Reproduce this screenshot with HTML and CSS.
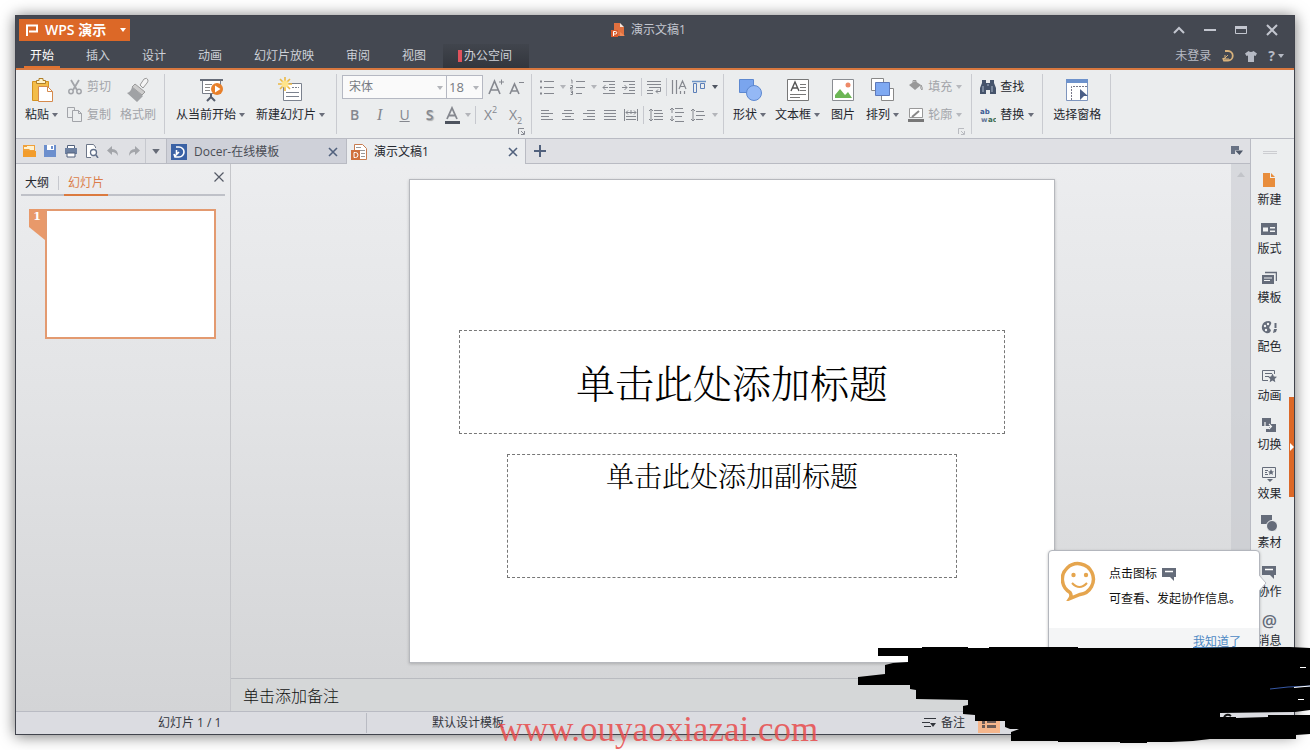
FILE: index.html
```html
<!DOCTYPE html>
<html lang="zh-CN">
<head>
<meta charset="utf-8">
<title>WPS 演示 - 演示文稿1</title>
<link rel="stylesheet" href="styles.css">
</head>
<body>
<svg class="defs" aria-hidden="true">
  <symbol id="caret" viewBox="0 0 6 4"><path d="M0 0h6L3 4z" fill="currentColor"/></symbol>
  <symbol id="close" viewBox="0 0 10 10"><path d="M1 1l8 8M9 1l-8 8" stroke="currentColor" stroke-width="1.6" fill="none"/></symbol>
  <symbol id="chat" viewBox="0 0 16 16"><path d="M1 2h14v9h-2v4l-4-4H1z" fill="currentColor"/><path d="M4 5.5h8" stroke="#fff" stroke-width="1.5"/></symbol>
  <symbol id="launcher" viewBox="0 0 7 7"><path d="M.5 6V.5H6M3 6.5h3.500V3M3 3l3 3" stroke="currentColor" fill="none"/></symbol>
</svg>

<div class="window">
  <header class="titlebar">
    <button class="app-button">
      <svg width="14" height="12" viewBox="0 0 14 12"><path d="M2 12V1.500H12v6H4" stroke="#fff" stroke-width="2" fill="none"/></svg>
      <b>WPS 演示</b>
      <svg class="app-caret" width="6" height="4"><use href="#caret"/></svg>
    </button>
    <div class="doc-title">
      <svg width="15" height="16" viewBox="0 0 15 16"><path d="M4 1h6v4h4v9H4z" fill="#e0703f"/><path d="M10 1l4 4h-4z" fill="#fbe3d6"/><path d="M1 8h7v7H1z" fill="#d95a2b"/><path d="M3.500 14V9.500h2a1 1 0 010 2.500h-2" stroke="#fff" fill="none"/><path d="M10 10l5 4h-5z" fill="#f08a58"/></svg>
      <span>演示文稿1</span>
    </div>
    <div class="window-controls">
      <button aria-label="折叠功能区"><svg width="14" height="12" viewBox="0 0 14 12"><path d="M2 9l5-5 5 5" stroke="currentColor" stroke-width="2" fill="none"/></svg></button>
      <button aria-label="最小化"><svg width="14" height="12" viewBox="0 0 14 12"><path d="M1 6h12" stroke="currentColor" stroke-width="2"/></svg></button>
      <button aria-label="最大化"><svg width="14" height="12" viewBox="0 0 14 12"><path d="M1.500 2.500h11v7h-11z" stroke="currentColor" fill="none"/><path d="M1 2h12v3H1z" fill="currentColor"/></svg></button>
      <button aria-label="关闭"><svg width="14" height="12" viewBox="0 0 14 12"><path d="M2 1l10 10M12 1L2 11" stroke="currentColor" stroke-width="2"/></svg></button>
    </div>
  </header>

  <nav class="menu">
    <div class="menu-tabs">
      <button class="menu-tab is-active">开始</button>
      <button class="menu-tab">插入</button>
      <button class="menu-tab">设计</button>
      <button class="menu-tab">动画</button>
      <button class="menu-tab">幻灯片放映</button>
      <button class="menu-tab">审阅</button>
      <button class="menu-tab">视图</button>
    </div>
    <button class="office-tab"><i></i>办公空间</button>
    <div class="account">
      <button>未登录</button>
      <button aria-label="Docer"><svg width="12" height="12" viewBox="0 0 12 12"><path d="M3 1h3a4.500 4.500 0 010 9.500H2L1 8" stroke="#d8b27c" stroke-width="1.800" fill="none"/><path d="M2 9l4-4M3 5v4h4" stroke="#d8b27c" fill="none"/></svg></button>
      <button aria-label="皮肤"><svg width="12" height="12" viewBox="0 0 12 12"><path d="M3.500 1Q6 3 8.500 1L12 3.500 10.500 6 9 5.500V12H3V5.500L1.500 6 0 3.500z" fill="currentColor"/></svg></button>
      <button aria-label="帮助" class="help"><b>?</b><svg width="6" height="4"><use href="#caret"/></svg></button>
    </div>
  </nav>

  <section class="ribbon">
    <div class="group g-clip">
      <button class="big"><svg width="28" height="28" viewBox="0 0 28 28"><path d="M4.500 5.500h16v19h-16z" fill="#f3bd49" stroke="#d39321"/><path d="M8.500 7.500v-3h2.500V2.500h4v2h2.500v3z" fill="#fff3c9" stroke="#ae7e28"/><path d="M10.500 10.500h9l5 5v10h-14z" fill="#fff" stroke="#d58a4d"/><path d="M19.500 10.500v5h5" fill="none" stroke="#d58a4d"/></svg><span>粘贴<svg class="caret" width="6" height="4"><use href="#caret"/></svg></span></button>
      <div class="stack">
        <button class="small is-off"><svg width="16" height="16" viewBox="0 0 16 16"><path d="M4 1l6 10M12 1L6 11" stroke="currentColor" stroke-width="1.800" fill="none"/><circle cx="4" cy="12.500" r="2.200" stroke="currentColor" fill="none" stroke-width="1.500"/><circle cx="12" cy="12.500" r="2.200" stroke="currentColor" fill="none" stroke-width="1.500"/></svg>剪切</button>
        <button class="small is-off"><svg width="16" height="16" viewBox="0 0 16 16"><path d="M5 10.500H.5V.5h7v3" stroke="currentColor" fill="none"/><path d="M5.500 3.500h6l3 3v8h-9zM11.500 3.500v3h3" stroke="currentColor" fill="none"/></svg>复制</button>
      </div>
      <button class="big is-off"><svg width="28" height="28" viewBox="0 0 28 28"><path d="M16 9l4-6q3-2 4 1 0 2-1 3l-4 5z" fill="#f4f4f4" stroke="#999"/><path d="M11 8l10 8-3 3-10-8z" fill="#ccc" stroke="#999"/><path d="M8 11l11 9-6 6-10-9q4-1 5-6z" fill="#a0a2a5"/></svg><span>格式刷</span></button>
    </div>
    <div class="group g-slides">
      <button class="big"><svg width="28" height="28" viewBox="0 0 28 28"><path d="M3 4h23" stroke="#666c78" stroke-width="2"/><path d="M5.500 5v12.500h18V5" fill="#fff" stroke="#777d88"/><path d="M8 8.500h7M8 11.500h5M8 14.500h5" stroke="#888"/><path d="M14 18v4M10 25l4-4 4 4" stroke="#555c6b" stroke-width="2" fill="none"/><circle cx="20" cy="13" r="6" fill="#e8802b"/><path d="M18 9.500l5.500 3.500-5.500 3.500z" fill="#fff"/></svg><span>从当前开始<svg class="caret" width="6" height="4"><use href="#caret"/></svg></span></button>
      <button class="big"><svg width="28" height="28" viewBox="0 0 28 28"><path d="M6.500 7.500h18v17h-18z" fill="#fff" stroke="#7b828e"/><path d="M15 11.500h7" stroke="#7b828e" stroke-dasharray="2 1"/><path d="M9 16.500h13M9 20.500h13" stroke="#7b828e"/><path d="M8 1v14M1 8h14M3 3l10 10M13 3L3 13" stroke="#ecb844" stroke-width="1.600"/><circle cx="8" cy="8" r="3.500" fill="#ffe48b"/></svg><span>新建幻灯片<svg class="caret" width="6" height="4"><use href="#caret"/></svg></span></button>
    </div>
    <div class="group g-font">
      <div class="stack">
        <div class="row">
          <label class="combo combo-font"><select aria-label="字体"><option>宋体</option></select><svg width="6" height="4"><use href="#caret"/></svg></label>
          <label class="combo combo-size"><select aria-label="字号"><option>18</option></select><svg width="6" height="4"><use href="#caret"/></svg></label>
          <button class="tool grow" aria-label="增大字号"><svg width="18" height="18" viewBox="0 0 18 18"><path d="M2 16L7.500 3 13 16M4 12h7" stroke="currentColor" stroke-width="1.600" fill="none"/><path d="M12 4h5M14.500 1.500v5" stroke="currentColor"/></svg></button>
          <button class="tool" aria-label="减小字号"><svg width="18" height="18" viewBox="0 0 18 18"><path d="M3 16L7.500 6 12 16M5 13h5" stroke="currentColor" stroke-width="1.600" fill="none"/><path d="M12 4.500h5" stroke="currentColor"/></svg></button>
        </div>
        <div class="row row-style">
          <button class="glyph"><b>B</b></button>
          <button class="glyph"><em>I</em></button>
          <button class="glyph"><u>U</u></button>
          <button class="glyph shadow">S</button>
          <button class="tool color" aria-label="字体颜色"><svg width="18" height="18" viewBox="0 0 18 18"><path d="M4 13L9 2l5 11M6 9.500h6" stroke="currentColor" stroke-width="1.800" fill="none"/><path d="M2 15h15v3H2z" fill="#4d535e"/></svg></button>
          <span class="drop is-off"><svg width="6" height="4"><use href="#caret"/></svg></span>
          <i class="sep"></i>
          <button class="glyph">X<sup>2</sup></button>
          <button class="glyph">X<sub>2</sub></button>
        </div>
      </div>
      <button class="launcher" aria-label="字体设置"><svg width="7" height="7"><use href="#launcher"/></svg></button>
    </div>
    <div class="group g-para">
      <div class="stack">
        <div class="row">
          <button class="tool" aria-label="项目符号"><svg width="16" height="16" viewBox="0 0 16 16"><path d="M5 2.500h10M5 8.500h10M5 14.500h10" stroke="currentColor"/><path d="M1 1.500h2v2H1zM1 7.500h2v2H1zM1 13.500h2v2H1z" fill="currentColor"/></svg></button>
          <span class="drop is-off"><svg width="6" height="4"><use href="#caret"/></svg></span>
          <button class="tool" aria-label="编号"><svg width="16" height="16" viewBox="0 0 16 16"><path d="M6 2.500h9M6 8.500h9M6 14.500h6" stroke="currentColor"/><path d="M1 1h1v3.500M.5 6.500h2v2h-2v1.500h2.500M.5 12h2v3.500h-2M1 13.500h1.500" stroke="currentColor" fill="none"/></svg></button>
          <span class="drop is-off"><svg width="6" height="4"><use href="#caret"/></svg></span>
          <button class="tool" aria-label="减少缩进"><svg width="16" height="16" viewBox="0 0 16 16"><path d="M2 2.500h12M8 5.500h6M8 8.500h6M8 11.500h6M2 14.500h12M7 8.500H2M4.500 6L2 8.500 4.500 11" stroke="currentColor" fill="none"/></svg></button>
          <button class="tool" aria-label="增加缩进"><svg width="16" height="16" viewBox="0 0 16 16"><path d="M2 2.500h12M8 5.500h6M8 8.500h6M8 11.500h6M2 14.500h12M1 8.500h5M3.500 6L6 8.500 3.500 11" stroke="currentColor" fill="none"/></svg></button>
          <i class="sep"></i>
          <button class="tool" aria-label="换行"><svg width="16" height="16" viewBox="0 0 16 16"><path d="M1 2.500h14M1 5.500h14M3 8.500h12M1 11.500h6M1 14.500h6M14.500 9v3.500H10M12 10.500l-2 2 2 2" stroke="currentColor" fill="none"/></svg></button>
          <i class="sep"></i>
          <button class="tool" aria-label="文字方向"><svg width="16" height="16" viewBox="0 0 16 16"><path d="M1.500 1v14M5.500 1v14M8 10l3.500-8L15 10M9.500 7.500h4M9.500 12v3M13.500 12v3" stroke="currentColor" fill="none" stroke-width="1.200"/></svg></button>
          <button class="tool dark" aria-label="对齐文本"><svg width="16" height="16" viewBox="0 0 16 16"><path d="M1 2.500h14" stroke="#6d94c6" stroke-width="1.500"/><path d="M2.500 4.500h3v9h-3zM9.500 4.500h4v5h-4z" stroke="#5b7fb8" fill="none"/></svg></button>
          <span class="drop dark"><svg width="6" height="4"><use href="#caret"/></svg></span>
        </div>
        <div class="row row-align">
          <button class="tool" aria-label="左对齐"><svg width="16" height="16" viewBox="0 0 16 16"><path d="M2 3.500h8M2 6.500h12M2 9.500h8M2 12.500h12" stroke="currentColor"/></svg></button>
          <button class="tool" aria-label="居中"><svg width="16" height="16" viewBox="0 0 16 16"><path d="M4 3.500h8M2 6.500h12M5 9.500h6M2 12.500h12" stroke="currentColor"/></svg></button>
          <button class="tool" aria-label="右对齐"><svg width="16" height="16" viewBox="0 0 16 16"><path d="M6 3.500h8M2 6.500h12M6 9.500h8M2 12.500h12" stroke="currentColor"/></svg></button>
          <button class="tool" aria-label="两端对齐"><svg width="16" height="16" viewBox="0 0 16 16"><path d="M2 3.500h12M2 6.500h12M2 9.500h12M2 12.500h12" stroke="currentColor"/></svg></button>
          <button class="tool" aria-label="分散对齐"><svg width="16" height="16" viewBox="0 0 16 16"><path d="M1.500 2v12M14.500 2v12M3 5.500h10M5 3.500l-2 2 2 2M11 3.500l2 2-2 2M3 9.500h10M3 12.500h10M8 3v4" stroke="currentColor" fill="none"/></svg></button>
          <i class="sep"></i>
          <button class="tool" aria-label="段前间距"><svg width="16" height="16" viewBox="0 0 16 16"><path d="M6 3.500h8M6 6.500h9M6 9.500h9M6 12.500h9M3 2v12M1 4l2-2 2 2M1 12l2 2 2-2" stroke="currentColor" fill="none"/></svg></button>
          <button class="tool" aria-label="段后间距"><svg width="16" height="16" viewBox="0 0 16 16"><path d="M6 1.500h8M6 5.500h9M6 9.500h7M6 14.500h9M3 1v5M1 3l2-2 2 2M3 9v5M1 12l2 2 2-2" stroke="currentColor" fill="none"/></svg></button>
          <button class="tool" aria-label="行距"><svg width="16" height="16" viewBox="0 0 16 16"><path d="M6 4.500h8M6 8.500h9M6 12.500h7M3 2v12M1 4l2-2 2 2M1 12l2 2 2-2" stroke="currentColor" fill="none"/></svg></button>
          <span class="drop is-off"><svg width="6" height="4"><use href="#caret"/></svg></span>
        </div>
      </div>
    </div>
    <div class="group g-draw">
      <button class="big"><svg width="28" height="28" viewBox="0 0 28 28"><path d="M3.500 3.500h14v13h-14z" fill="#7aa5ee" stroke="#5d88d0"/><circle cx="18" cy="17" r="7.500" fill="#94b8f5" stroke="#5d88d0"/></svg><span>形状<svg class="caret" width="6" height="4"><use href="#caret"/></svg></span></button>
      <button class="big"><svg width="28" height="28" viewBox="0 0 28 28"><path d="M3.500 3.500h21v21h-21z" fill="#fff" stroke="#777"/><path d="M7 15l4-9 4 9M8.500 12h5" stroke="#555" stroke-width="1.400" fill="none"/><path d="M16 8.500h6M16 11.500h6M16 14.500h6M6 18.500h16M6 21.500h10" stroke="#777"/></svg><span>文本框<svg class="caret" width="6" height="4"><use href="#caret"/></svg></span></button>
      <button class="big"><svg width="28" height="28" viewBox="0 0 28 28"><path d="M3.500 3.500h21v21h-21z" fill="#fff" stroke="#8a8d92"/><path d="M6 22v-3l5-6 5 6 3-3 4 6z" fill="#6cb655"/><circle cx="19" cy="9" r="2.500" fill="#ee8a68"/></svg><span>图片</span></button>
      <button class="big"><svg width="28" height="28" viewBox="0 0 28 28"><path d="M2.500 2.500h12v12h-12zM12.500 12.500h12v12h-12z" fill="#fff" stroke="#888"/><path d="M6.500 6.500h14v13h-14z" fill="#7fa9f2" stroke="#5d79bb"/></svg><span>排列<svg class="caret" width="6" height="4"><use href="#caret"/></svg></span></button>
      <div class="stack">
        <button class="small is-off"><svg width="16" height="16" viewBox="0 0 16 16"><path d="M1 6l6-4 6 4-6 5z" fill="#999"/><path d="M5 4V1.500h3V6M13 6q2 3 1 5-2-1-1-5" stroke="#999" fill="none"/></svg>填充<svg class="caret" width="6" height="4"><use href="#caret"/></svg></button>
        <button class="small is-off"><svg width="16" height="16" viewBox="0 0 16 16"><path d="M1.500 1.500h13v9h-13z" stroke="#999" fill="#fff"/><path d="M4 10l7-6" stroke="#888" stroke-width="2"/><path d="M0 12h16v3H0z" fill="#777"/></svg>轮廓<svg class="caret" width="6" height="4"><use href="#caret"/></svg></button>
      </div>
      <button class="launcher is-off" aria-label="绘图设置"><svg width="7" height="7"><use href="#launcher"/></svg></button>
    </div>
    <div class="group g-find">
      <div class="stack">
        <button class="small"><svg width="16" height="16" viewBox="0 0 16 16"><path d="M2 4V1h4v3h4V1h4v3l2 5v6h-6v-4H6v4H0V9z" fill="#46546b"/><path d="M3 7v6M12 7v6M7 6h2" stroke="#a9b6c9"/></svg>查找</button>
        <button class="small"><svg width="16" height="16" viewBox="0 0 16 16"><text x="0" y="7" class="tiny navy">ab</text><text x="1" y="15" class="tiny slate">w</text><text x="8" y="15" class="tiny green">ac</text></svg>替换<svg class="caret" width="6" height="4"><use href="#caret"/></svg></button>
      </div>
    </div>
    <div class="group">
      <button class="big"><svg width="28" height="28" viewBox="0 0 28 28"><path d="M3.500 3.500h21v21h-21z" fill="#fff" stroke="#7e95bd"/><path d="M3 3h22v4H3z" fill="#6d92cc"/><path d="M8.500 24V10.500H24" stroke="#778" stroke-dasharray="2 1" fill="none"/><path d="M17 13l8 7h-4l-4 4z" fill="#4b5f87"/></svg><span>选择窗格</span></button>
    </div>
  </section>

  <div class="body">
    <div class="left">
      <div class="strip">
        <div class="quick">
          <button aria-label="打开"><svg width="14" height="14" viewBox="0 0 14 14"><path d="M1 1h12v12H1z" fill="#f0a03a"/><path d="M5 2h7v4H8L7 5H2V3h3z" fill="#fff1cf"/><path d="M1 7h13v6H1z" fill="#f29c2c"/></svg></button>
          <button aria-label="保存"><svg width="14" height="14" viewBox="0 0 14 14"><path d="M1 1h12v12H1z" fill="#6c8fcd"/><path d="M4 1h7v5H4z" fill="#fff"/><path d="M8 2h2v3H8z" fill="#6c8fcd"/></svg></button>
          <button aria-label="打印"><svg width="14" height="14" viewBox="0 0 14 14"><path d="M3.500 1.500h7v11h-7z" fill="#fff" stroke="#52617c"/><path d="M1 4h12v6H1z" fill="#6d80a0"/><path d="M3 9h8v4H3z" fill="#fff" stroke="#52617c"/></svg></button>
          <button aria-label="打印预览"><svg width="14" height="14" viewBox="0 0 14 14"><path d="M10.500 4V3l-2-2.500h-7v13H6" fill="#fff" stroke="#6d7688"/><circle cx="8.500" cy="8.500" r="3" fill="#fff" stroke="#62708a" stroke-width="1.300"/><path d="M11 11l2 3" stroke="#62708a" stroke-width="1.500"/></svg></button>
          <button aria-label="撤销" class="is-off"><svg width="14" height="14" viewBox="0 0 14 14"><path d="M6 2v3q6 0 6 7-2-4-6-4v3L1 6.500z" fill="#a3a5aa"/></svg></button>
          <button aria-label="恢复" class="is-off"><svg width="14" height="14" viewBox="0 0 14 14"><path d="M8 2v3q-6 0-6 7 2-4 6-4v3l5-4.500z" fill="#a3a5aa"/></svg></button>
          <i class="sep"></i>
          <button aria-label="更多" class="more"><svg width="8" height="5"><use href="#caret"/></svg></button>
        </div>
        <div class="doc-tab">
          <svg width="16" height="16" viewBox="0 0 16 16"><path d="M0 0h16v16H0z" fill="#3b62a5"/><path d="M5 3h3a5 5 0 010 10H4l-1-3M4 12l4-4M5.500 6v4" stroke="#fff" stroke-width="1.600" fill="none"/></svg>
          <span>Docer-在线模板</span>
          <button aria-label="关闭标签"><svg width="10" height="10"><use href="#close"/></svg></button>
        </div>
        <div class="doc-tab is-active">
          <svg width="16" height="16" viewBox="0 0 16 16"><path d="M3.500 6V.5h8l4 4v11h-7" fill="#fff" stroke="#c77c50"/><path d="M5 3.500h5M9 6.500h5M10 9.500h4M10 12.500h4" stroke="#999"/><path d="M0 6h9v10H0z" fill="#d0703c"/><path d="M3 13.500v-5h1.500a2 2 0 010 5z" stroke="#fff" fill="none"/></svg>
          <span>演示文稿1</span>
          <button aria-label="关闭标签"><svg width="10" height="10"><use href="#close"/></svg></button>
        </div>
        <button class="add" aria-label="新建标签"><svg width="12" height="12" viewBox="0 0 12 12"><path d="M6 0v12M0 6h12" stroke="currentColor" stroke-width="2"/></svg></button>
        <button class="tab-list" aria-label="标签列表"><svg width="14" height="12" viewBox="0 0 14 12"><path d="M1 1h8v4H5v4H1z" fill="#687284"/><path d="M5 5.500h8L9.500 10z" fill="#4f5869"/></svg></button>
      </div>

      <div class="work">
        <aside class="outline">
          <div class="outline-tabs">
            <button class="outline-tab">大纲</button>
            <i class="sep"></i>
            <button class="outline-tab is-active">幻灯片</button>
          </div>
          <button class="outline-close" aria-label="关闭窗格"><svg width="10" height="10" viewBox="0 0 10 10"><path d="M.5.5l9 9M9.500.5l-9 9" stroke="currentColor" stroke-width="1.200"/></svg></button>
          <div class="thumb-row">
            <span class="thumb-no">1</span>
            <button class="thumb" aria-label="幻灯片 1"></button>
          </div>
        </aside>
        <div class="editor">
          <div class="stage">
            <main class="canvas">
              <div class="slide">
                <h1 class="ph ph-title">单击此处添加标题</h1>
                <h2 class="ph ph-sub">单击此处添加副标题</h2>
              </div>
            </main>
            <div class="scroll"><svg width="8" height="5" viewBox="0 0 8 5"><path d="M0 5l4-5 4 5z" fill="#c2c4c9"/></svg></div>
          </div>
          <textarea class="notes" rows="1" aria-label="备注">单击添加备注</textarea>
        </div>
      </div>
    </div>

    <aside class="side">
      <i class="grip"></i>
      <button class="side-item"><svg width="16" height="16" viewBox="0 0 16 16"><path d="M2 1h7v5h5v9H2z" fill="#e88d3c"/><path d="M10 1l4 4h-4z" fill="#e88d3c"/></svg>新建</button>
      <button class="side-item"><svg width="16" height="16" viewBox="0 0 16 16"><path d="M0 2h16v12H0z" fill="currentColor"/><path d="M2 6.500h5v4H2zM9 6h5v1.500H9zM9 9.500h5V11H9z" fill="#f2f3f4"/></svg>版式</button>
      <button class="side-item"><svg width="16" height="16" viewBox="0 0 16 16"><path d="M4 2.500h11.500V11" stroke="currentColor" stroke-width="1.500" fill="none"/><path d="M1 5h12v9H1z" fill="currentColor"/><path d="M3 8h8M3 10.500h6" stroke="#f2f3f4"/></svg>模板</button>
      <button class="side-item"><svg width="16" height="16" viewBox="0 0 16 16"><path d="M8 2q4 1 1 5-2 2 1 4-1 4-5 3-5-2-4-7 1-5 7-5z" fill="currentColor"/><circle cx="4" cy="7" r="1.200" fill="#f2f3f4"/><circle cx="7" cy="5" r="1.200" fill="#f2f3f4"/><circle cx="5" cy="11" r="1.200" fill="#f2f3f4"/><path d="M14.500 4v5" stroke="currentColor" stroke-width="2"/><path d="M13 10h3l-1 3-3 1z" fill="currentColor"/></svg>配色</button>
      <button class="side-item"><svg width="16" height="16" viewBox="0 0 16 16"><path d="M13.500 6V2.500H1.500v10H7M4 5.500h7M4 8.500h4" stroke="currentColor" fill="none"/><path d="M11.500 5.500l1.400 3 3.100.3-2.300 2.200.6 3.200-2.800-1.700-2.800 1.700.6-3.200L7 8.800l3.100-.3z" fill="currentColor"/></svg>动画</button>
      <button class="side-item"><svg width="16" height="16" viewBox="0 0 16 16"><path d="M1 1h9v8H1zM8 7h7v8H5v-3h3z" fill="currentColor"/><path d="M4 5v4.500h6M8 7l2.500 2.500L8 12" stroke="#f2f3f4" fill="none" stroke-width="1.200"/></svg>切换</button>
      <button class="side-item"><svg width="16" height="16" viewBox="0 0 16 16"><path d="M1.500 1.500h13v10h-13z" stroke="currentColor" fill="none"/><path d="M4 4.500h3M4 6.500h2M4 8.500h3" stroke="currentColor"/><path d="M10 3l1 2.200 2 .2-1.500 1.400.4 2.200-1.900-1.200L8 9l.5-2.200L7 5.400l2-.2zM6 13h6l-3 3z" fill="currentColor"/></svg>效果</button>
      <button class="side-item"><svg width="16" height="16" viewBox="0 0 16 16"><path d="M0 0h11v9H0z" fill="currentColor"/><circle cx="11" cy="11" r="5.500" fill="currentColor" stroke="#f2f3f4"/></svg>素材</button>
      <button class="side-item"><svg width="16" height="16"><use href="#chat"/></svg>协作</button>
      <button class="side-item"><span class="at">@</span>消息</button>
      <button class="handle" aria-label="展开侧栏"><svg width="4" height="8" viewBox="0 0 4 8"><path d="M0 0l4 4-4 4z" fill="#fff"/></svg></button>
    </aside>
  </div>

  <footer class="status">
    <span class="status-page">幻灯片 1 / 1</span>
    <span class="status-theme">默认设计模板</span>
    <button class="status-notes"><svg width="15" height="12" viewBox="0 0 15 12"><path d="M2 1.500h12M0 5.500h8M2 9.500h7" stroke="currentColor" stroke-width="1.200"/><path d="M8 6h6l-3 4z" fill="currentColor"/></svg>备注</button>
    <button class="status-view" aria-label="普通视图"><svg width="14" height="12" viewBox="0 0 14 12"><path d="M0 0h3v3H0zM0 4h3v3H0zM0 8h3v3H0zM5 0h9v6H5zM5 8h9v3H5z" fill="#6b5b56"/></svg></button>
  </footer>

  <div class="tip" role="dialog" aria-label="协作提示">
    <div class="tip-main">
      <svg width="36" height="40" viewBox="0 0 36 40"><path d="M9 31.500A15.500 15.500 0 1119 33.500L9 37.500q2-3 0-6z" fill="none" stroke="#e5a54e" stroke-width="3.500"/><circle cx="12.500" cy="14" r="2.200" fill="#e5a54e"/><circle cx="25" cy="14" r="2.200" fill="#e5a54e"/><path d="M11 22q7.500 8 15 0" stroke="#e5a54e" stroke-width="2" fill="none"/></svg>
      <div class="tip-text">
        <p>点击图标 <svg width="16" height="16"><use href="#chat"/></svg></p>
        <p>可查看、发起协作信息。</p>
      </div>
    </div>
    <div class="tip-foot"><a href="#">我知道了</a></div>
    <svg class="tip-arrow" width="8" height="16" viewBox="0 0 8 16"><path d="M0 0l7 8-7 8" fill="#fff" stroke="#b9bcc2"/></svg>
  </div>
</div>

<div class="watermark">www.ouyaoxiazai.com</div>

<svg class="scribble" width="452" height="104" viewBox="858 646 452 104" aria-hidden="true">
  <path d="M878 648H922V647H968V648H989V647H1078V648H1200L1240 647H1290L1310 648V710L1295 712L1220 713V717H1236V718L1268 717V715H1310V734L1296 735V739H1210L1193 741L1171 742H1147V743H1120V742H1058V741H1011V732L1019 729H1010L1005 727V721H975V715L963 714V706L968 705V700L916 699V690L910 689V685H858V677L885 674V665L893 663L908 662V656H878Z"/>
  <path d="M1224 717q3-4 7-1" stroke="#111" stroke-width="2" fill="none"/>
  <path d="M1300 667.500h6M1298 699.500h6" stroke="#fff"/>
  <path d="M1270 689l18-2 22-1" stroke="#3557a5" fill="none"/>
  <path d="M1294 687.500l16-1.500" stroke="#fff"/>
</svg>
</body>
</html>
```
FILE: styles.css
```css
* { box-sizing: border-box; }

body {
  margin: 0;
  padding: 15px;
  min-height: 100vh;
  display: flex;
  position: relative;
  overflow: hidden;
  background: #fff;
  color: #25282e;
  font: 12px/16px "Open Sans", "Noto Sans CJK SC", sans-serif;
}

button {
  margin: 0;
  padding: 0;
  border: 0;
  background: none;
  color: inherit;
  font: inherit;
  display: flex;
  align-items: center;
  justify-content: center;
  white-space: nowrap;
}

svg { flex: none; }
.defs { position: absolute; width: 0; height: 0; }
.is-off { color: #a2a4a9; }

.window {
  flex: 1;
  min-width: 0;
  height: calc(100vh - 30px);
  min-height: 480px;
  display: flex;
  flex-direction: column;
  position: relative;
  border: 1px solid #41444d;
  background: #ebedee;
  box-shadow: 0 1px 14px rgba(0, 0, 0, .55);
}

/* Title bar */
.titlebar {
  height: 28px;
  padding: 0 7px 0 3px;
  display: grid;
  grid-template-columns: 1fr auto 1fr;
  align-items: center;
  background: #444851;
  color: #c3c6cf;
}
.app-button {
  justify-self: start;
  height: 22px;
  padding: 0 4px 0 6px;
  gap: 6px;
  background: #dc6827;
  color: #fff;
  font-size: 13px;
}
.app-button b { font-weight: 600; font-size: 14px; }
.app-caret { margin-left: 8px; }
.doc-title { display: flex; align-items: center; gap: 6px; margin-right: 10px; }
.window-controls { justify-self: end; display: flex; }
.window-controls button { width: 31px; height: 24px; }

/* Menu tabs */
.menu {
  height: 26px;
  padding-left: 8px;
  display: flex;
  background: #444851;
  color: #ced1d8;
  border-bottom: 2px solid #d9783f;
}
.menu-tabs { display: flex; gap: 20px; }
.menu-tab { padding: 0 6px; border-bottom: 2px solid transparent; border-top: 2px solid transparent; }
.menu-tab.is-active { border-bottom-color: #e2732f; color: #fff; }
.office-tab { margin-left: 11px; padding: 0 17px 0 15px; gap: 2px; background: linear-gradient(#41454d, #33363d); }
.office-tab i { width: 4px; height: 12px; background: #e0525c; }
.account { margin-left: auto; padding-right: 10px; display: flex; gap: 11px; color: #b6bac4; }
.help { gap: 3px; font-size: 14px; }

/* Ribbon */
.ribbon { height: 69px; display: flex; border-bottom: 1px solid #b9bbc3; overflow: hidden; }
.group { position: relative; flex: none; display: flex; gap: 11px; padding: 5px 10px 0; }
.group::after { content: ""; position: absolute; right: 0; top: 4px; bottom: 4px; width: 1px; background: #c9cbd0; }
.g-clip { gap: 9px; padding: 5px 9px 0; }
.g-slides { padding: 5px 12px 0 11px; }
.g-font { padding: 5px 4px 0 5px; }
.g-para { padding: 5px 4px 0 5px; }
.g-draw { gap: 9px; padding: 5px 10px 0 9px; }
.g-find { padding: 5px 9px 0 8px; }
.caret { margin-left: 3px; color: #6a6e7a; }
.is-off .caret { color: #b7b9be; }
.big { flex-direction: column; justify-content: flex-start; padding-top: 1px; }
.big span { display: flex; align-items: center; line-height: 22px; }
.stack { display: flex; flex-direction: column; gap: 4px; }
.small { height: 24px; gap: 4px; justify-content: flex-start; }
.small .caret { margin-left: 0; }
.row { height: 24px; display: flex; align-items: center; color: #85888f; }
.tool { width: 20px; height: 20px; }
.grow { margin-left: 3px; }
.drop { width: 11px; display: flex; justify-content: center; color: #b3b5ba; }
.dark { color: #4f5561; }
.sep { flex: none; width: 1px; height: 18px; margin: 0 2px; background: #c6c8ce; }
.glyph { width: 25px; height: 20px; font-size: 14px; }
.glyph b { font-weight: 600; }
.glyph em { font-family: "Liberation Serif", serif; font-size: 16px; }
.glyph sup, .glyph sub { font-size: 9px; line-height: 9px; }
.glyph sup { align-self: flex-start; }
.glyph sub { align-self: flex-end; }
.shadow { text-shadow: 1px 1px 1px #aaa; font-weight: 600; }
.combo { position: relative; height: 24px; border: 1px solid #b5b8c2; background: #fafafa; }
.combo + .combo { border-left: 0; }
.combo-font { width: 105px; }
.combo-size { width: 36px; }
.combo select {
  width: 100%;
  height: 100%;
  appearance: none;
  border: 0;
  margin: 0;
  padding: 0 2px 0 6px;
  background: none;
  color: #777a82;
  font: inherit;
}
.combo-size select { padding-left: 2px; font-size: 13px; }
.combo svg { position: absolute; right: 3px; top: 10px; color: #b3b5ba; }
.launcher { position: absolute; right: 7px; bottom: 3px; color: #888b93; }
.launcher.is-off { color: #b9bbc0; }
.row-align { gap: 1px; }
.row-align .sep { margin: 0 1px; }
.tiny { font: bold 7px "DejaVu Sans", sans-serif; }
.navy { fill: #3d5a94; }
.slate { fill: #66779a; }
.green { fill: #3c6c55; }

/* Body */
.body { flex: 1; min-height: 0; display: flex; }
.left { flex: 1; min-width: 0; display: flex; flex-direction: column; }

.strip { height: 25px; display: flex; background: #dfe0e4; border-bottom: 1px solid #b9bbc3; }
.quick { display: flex; align-items: center; padding-left: 2px; }
.quick button { width: 21px; height: 24px; }
.quick .sep { height: 24px; margin: 0 0 0 1px; }
.quick .more { width: 20px; color: #666b77; }
.doc-tab {
  width: 180px;
  padding: 2px 8px 0 4px;
  display: flex;
  align-items: center;
  gap: 7px;
  border-left: 1px solid #b9bbc3;
  background: #cfd1d9;
  color: #4a4d55;
}
.doc-tab button { margin-left: auto; color: #51617d; }
.doc-tab.is-active { width: 179px; margin-bottom: -1px; padding: 1px 7px 0 4px; background: #ebedef; color: #25282e; }
.add { width: 28px; border-left: 1px solid #b9bbc3; color: #51617d; }
.tab-list { margin-left: auto; width: 26px; }

.work { flex: 1; min-height: 0; display: flex; background: linear-gradient(#ecedef, #e2e3e5 45%, #d3d4d6); }
.outline { position: relative; width: 215px; padding: 8px 5px 0; border-right: 1px solid #c5c6ca; }
.outline-tabs { height: 24px; display: flex; align-items: center; border-bottom: 2px solid #bfc1c8; }
.outline-tabs .sep { height: 14px; margin: 0 5px; }
.outline-tab { height: 24px; padding: 0 4px; align-self: flex-start; border-bottom: 2px solid transparent; }
.outline-tab.is-active { color: #db7d49; border-bottom-color: #db7a3f; }
.outline-close { position: absolute; top: 8px; right: 6px; color: #555a66; }
.thumb-row { display: flex; padding: 13px 9px 0 8px; }
.thumb-no {
  width: 16px;
  height: 31px;
  background: #e8996a;
  clip-path: polygon(0 0, 100% 0, 100% 100%, 0 58%);
  color: #fff;
  font: bold 11px/16px "DejaVu Serif", serif;
  text-align: center;
}
.thumb { flex: 1; aspect-ratio: 171 / 130; background: #fff; border: 2px solid #e39a70; }

.editor { flex: 1; min-width: 0; display: flex; flex-direction: column; }
.stage { flex: 1; min-height: 0; display: flex; }
.canvas { flex: 1; min-width: 0; min-height: 0; padding: 15px 0 15px 2px; display: flex; justify-content: center; }
.scroll { width: 19px; padding-top: 8px; background: rgba(190, 192, 200, .45); display: flex; justify-content: center; align-items: flex-start; }
.slide {
  height: 100%;
  aspect-ratio: 4 / 3;
  display: grid;
  grid-template-rows: 31.2% 21.6% 4% 25.7% 1fr;
  justify-items: center;
  background: #fff;
  border: 1px solid #b6b8bd;
  box-shadow: 0 1px 3px rgba(0, 0, 0, .2);
}
.ph {
  margin: 0;
  border: 1px dashed #777;
  color: #000;
  font-family: "Noto Serif CJK SC", "Noto Sans CJK SC", sans-serif;
  font-weight: 300;
  text-align: center;
}
.ph-title { grid-row: 2; width: 85%; font-size: 39px; line-height: 100px; }
.ph-sub { grid-row: 4; width: 70%; font-size: 28px; line-height: 40px; }
.notes {
  height: 33px;
  padding: 4px 12px;
  resize: none;
  border: 0;
  border-top: 1px solid #b9bbc0;
  background: #d5d7d8;
  color: #111;
  font: 16px/24px "Noto Sans CJK SC", sans-serif;
  font-weight: 300;
}

/* Right side bar */
.side {
  position: relative;
  width: 44px;
  padding: 12px 6px 0 0;
  display: flex;
  flex-direction: column;
  align-items: center;
  overflow: hidden;
  border-left: 1px solid #b9bbc3;
  background: #eceeef;
}
.grip { flex: none; width: 14px; height: 3px; margin-bottom: 18px; border: solid #cccdd1; border-width: 1px 0; }
.side-item { flex: none; height: 49px; flex-direction: column; justify-content: flex-start; gap: 4px; }
.side-item svg { color: #656c7a; }
.at { height: 16px; color: #656c7a; font-size: 17px; font-weight: 600; line-height: 16px; }
.handle { position: absolute; right: 0; top: 258px; width: 5px; height: 100px; background: #dc6827; }

/* Status bar */
.status {
  height: 23px;
  display: flex;
  align-items: center;
  border-top: 1px solid #b9bbc3;
  background: #dbdce1;
  color: #33363d;
}
.status-page { width: 351px; padding-left: 142px; border-right: 1px solid #b9bbc3; line-height: 20px; }
.status-theme { padding-left: 65px; }
.status-notes { margin-left: auto; gap: 4px; }
.status-view { width: 22px; height: 20px; margin: 0 294px 0 13px; background: #f5b68c; }

/* Collaboration tip */
.tip {
  position: absolute;
  right: 34px;
  bottom: 78px;
  width: 212px;
  border: 1px solid #b3b6bd;
  border-radius: 4px;
  background: #fff;
  color: #111;
  box-shadow: 0 1px 3px rgba(0, 0, 0, .25);
}
.tip-main { display: flex; gap: 12px; padding: 10px 12px 17px; }
.tip-text p { margin: 0; display: flex; align-items: center; gap: 4px; line-height: 25px; white-space: nowrap; }
.tip-text svg { color: #656c7a; }
.tip-foot { padding: 6px 18px 5px 0; background: #f4f5f6; text-align: right; }
.tip-foot a { color: #4d88c4; }
.tip-arrow { position: absolute; right: -8px; top: 24px; }

.watermark {
  position: absolute;
  left: 38%;
  bottom: 0;
  color: rgba(232, 75, 75, .85);
  font: 35px/40px "Liberation Serif", serif;
}
.scribble { position: absolute; right: 0; bottom: 0; }
```
